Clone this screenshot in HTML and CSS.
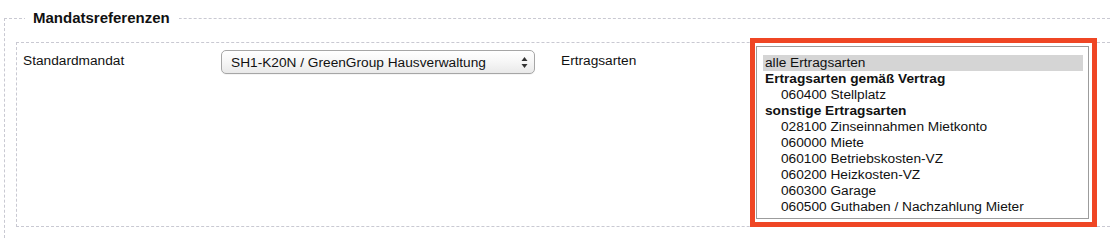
FILE: index.html
```html
<!DOCTYPE html>
<html lang="de">
<head>
<meta charset="utf-8">
<title>Mandatsreferenzen</title>
<link rel="stylesheet" href="styles.css">
</head>
<body>
<fieldset class="outer">
  <legend class="outer-legend">Mandatsreferenzen</legend>
  <fieldset class="inner">
    <div class="row">
      <div class="label">Standardmandat</div>
      <div class="field">
        <div class="select">
          <span class="select-text">SH1-K20N / GreenGroup Hausverwaltung</span>
          <svg class="select-arrows" width="7" height="11" viewBox="0 0 7 11">
            <polygon points="3.5,0 6.5,4 0.5,4" fill="#333"/>
            <polygon points="0.5,7 6.5,7 3.5,11" fill="#333"/>
          </svg>
        </div>
      </div>
      <div class="label">Ertragsarten</div>
      <div class="highlight">
        <div class="listbox">
          <div class="opt selected">alle Ertragsarten</div>
          <div class="grp">Ertragsarten gemäß Vertrag</div>
          <div class="opt sub">060400 Stellplatz</div>
          <div class="grp">sonstige Ertragsarten</div>
          <div class="opt sub">028100 Zinseinnahmen Mietkonto</div>
          <div class="opt sub">060000 Miete</div>
          <div class="opt sub">060100 Betriebskosten-VZ</div>
          <div class="opt sub">060200 Heizkosten-VZ</div>
          <div class="opt sub">060300 Garage</div>
          <div class="opt sub">060500 Guthaben / Nachzahlung Mieter</div>
        </div>
      </div>
    </div>
  </fieldset>
</fieldset>
</body>
</html>
```

FILE: styles.css
```css
html, body {
  margin: 0;
  padding: 0;
  background: #ffffff;
  overflow: hidden;
}

body {
  font-family: "Liberation Sans", Arial, Helvetica, sans-serif;
  font-size: 13.7px;
  color: #111;
}

.outer {
  margin: 8px 0 0 4px;
  padding: 14px 0 11px 11px;
  border: 1px dashed #c9c9d2;
  border-right: none;
  border-bottom: none;
  min-width: 0;
}

.outer-legend {
  margin-left: 9px;
  padding: 0 9px 0 8px;
  font-size: 15px;
  font-weight: bold;
  line-height: 20px;
  color: #111;
}

.inner {
  margin: 0;
  padding: 0 0 0 6px;
  border: 1px dashed #c9c9d2;
  border-right: none;
  min-width: 0;
}

.row {
  display: grid;
  grid-template-columns: 198px 340px 189px auto;
  align-items: start;
}

.label {
  margin-top: 10px;
  line-height: 16px;
}

.field {
  margin-top: 7px;
}

.select {
  box-sizing: border-box;
  width: 314px;
  height: 24px;
  display: flex;
  align-items: center;
  justify-content: space-between;
  padding: 1px 6px 0 9px;
  border: 1px solid #a6a6a6;
  border-radius: 5px;
  background: linear-gradient(#ffffff, #f6f6f6 50%, #e9e9e9);
  box-shadow: 0 1px 0 rgba(0, 0, 0, 0.04);
  color: #111;
}

.select-arrows {
  display: block;
}

.highlight {
  justify-self: start;
  margin-top: -5px;
  margin-bottom: -1px;
  padding: 3px 3px 3px 1px;
  border: 5px solid #ef4624;
}

.listbox {
  box-sizing: border-box;
  width: 333px;
  height: 173px;
  padding: 8px 5px 0 6px;
  border: 1px solid #9c9c9c;
  background: #fff;
}

.opt,
.grp {
  line-height: 16px;
  height: 16px;
  padding-left: 2px;
  white-space: nowrap;
}

.grp {
  font-weight: bold;
}

.sub {
  padding-left: 18px;
}

.selected {
  background: #d5d5d5;
}
```
